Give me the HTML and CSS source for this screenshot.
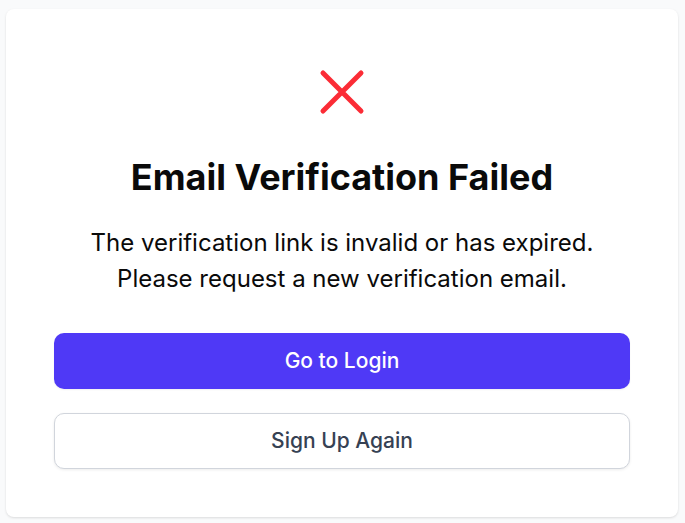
FILE: index.html
```html
<!DOCTYPE html>
<html lang="en">
<head>
<meta charset="utf-8">
<title>Email Verification Failed</title>
<link rel="stylesheet" href="styles.css">
</head>
<body>
  <main class="page">
    <section class="card">
      <div class="icon-wrap">
        <svg class="icon-x" width="48" height="48" viewBox="0 0 48 48" aria-hidden="true">
          <path d="M5 5 L43 43 M43 5 L5 43" fill="none" stroke="#fb2c36" stroke-width="5" stroke-linecap="round"/>
        </svg>
      </div>
      <h1 class="title">Email Verification Failed</h1>
      <p class="message">The verification link is invalid or has expired.<br>Please request a new verification email.</p>
      <div class="actions">
        <a class="btn btn-primary" href="#">Go to Login</a>
        <a class="btn btn-secondary" href="#">Sign Up Again</a>
      </div>
    </section>
  </main>
</body>
</html>
```
FILE: styles.css
```css
html, body {
  margin: 0;
  padding: 0;
}
body {
  background: #f9fafb;
  font-family: "Inter", "Noto Sans", sans-serif;
  color: #0a0a0a;
}
.page {
  min-height: 523px;
  display: flex;
  justify-content: center;
  align-items: center;
  box-sizing: border-box;
  padding-top: 2px;
  padding-right: 1px;
}
.card {
  width: 672px;
  box-sizing: border-box;
  background: #ffffff;
  border-radius: 8px;
  box-shadow: 0 1px 3px rgba(0,0,0,0.08), 0 1px 2px rgba(0,0,0,0.05);
  padding: 48px;
  text-align: center;
}
.icon-wrap {
  height: 70px;
  display: flex;
  justify-content: center;
  align-items: center;
}
.icon-x {
  display: block;
}
.title {
  margin: 30px 0 0;
  font-size: 36px;
  line-height: 40px;
  font-weight: 700;
  color: #0a0a0a;
}
.message {
  margin: 28px 0 0;
  font-size: 24px;
  line-height: 36px;
  color: #0a0a0a;
}
.actions {
  margin-top: 36px;
  display: flex;
  flex-direction: column;
  gap: 24px;
}
.btn {
  display: flex;
  align-items: center;
  justify-content: center;
  height: 56px;
  box-sizing: border-box;
  border-radius: 10px;
  font-size: 21px;
  font-weight: 500;
  text-decoration: none;
}
.btn-primary {
  background: #4f39f6;
  color: #ffffff;
  box-shadow: 0 1px 2px rgba(0,0,0,0.06);
}
.btn-secondary {
  background: #ffffff;
  color: #364153;
  border: 1px solid #d1d5dc;
  box-shadow: 0 1px 3px rgba(0,0,0,0.08);
}
```
